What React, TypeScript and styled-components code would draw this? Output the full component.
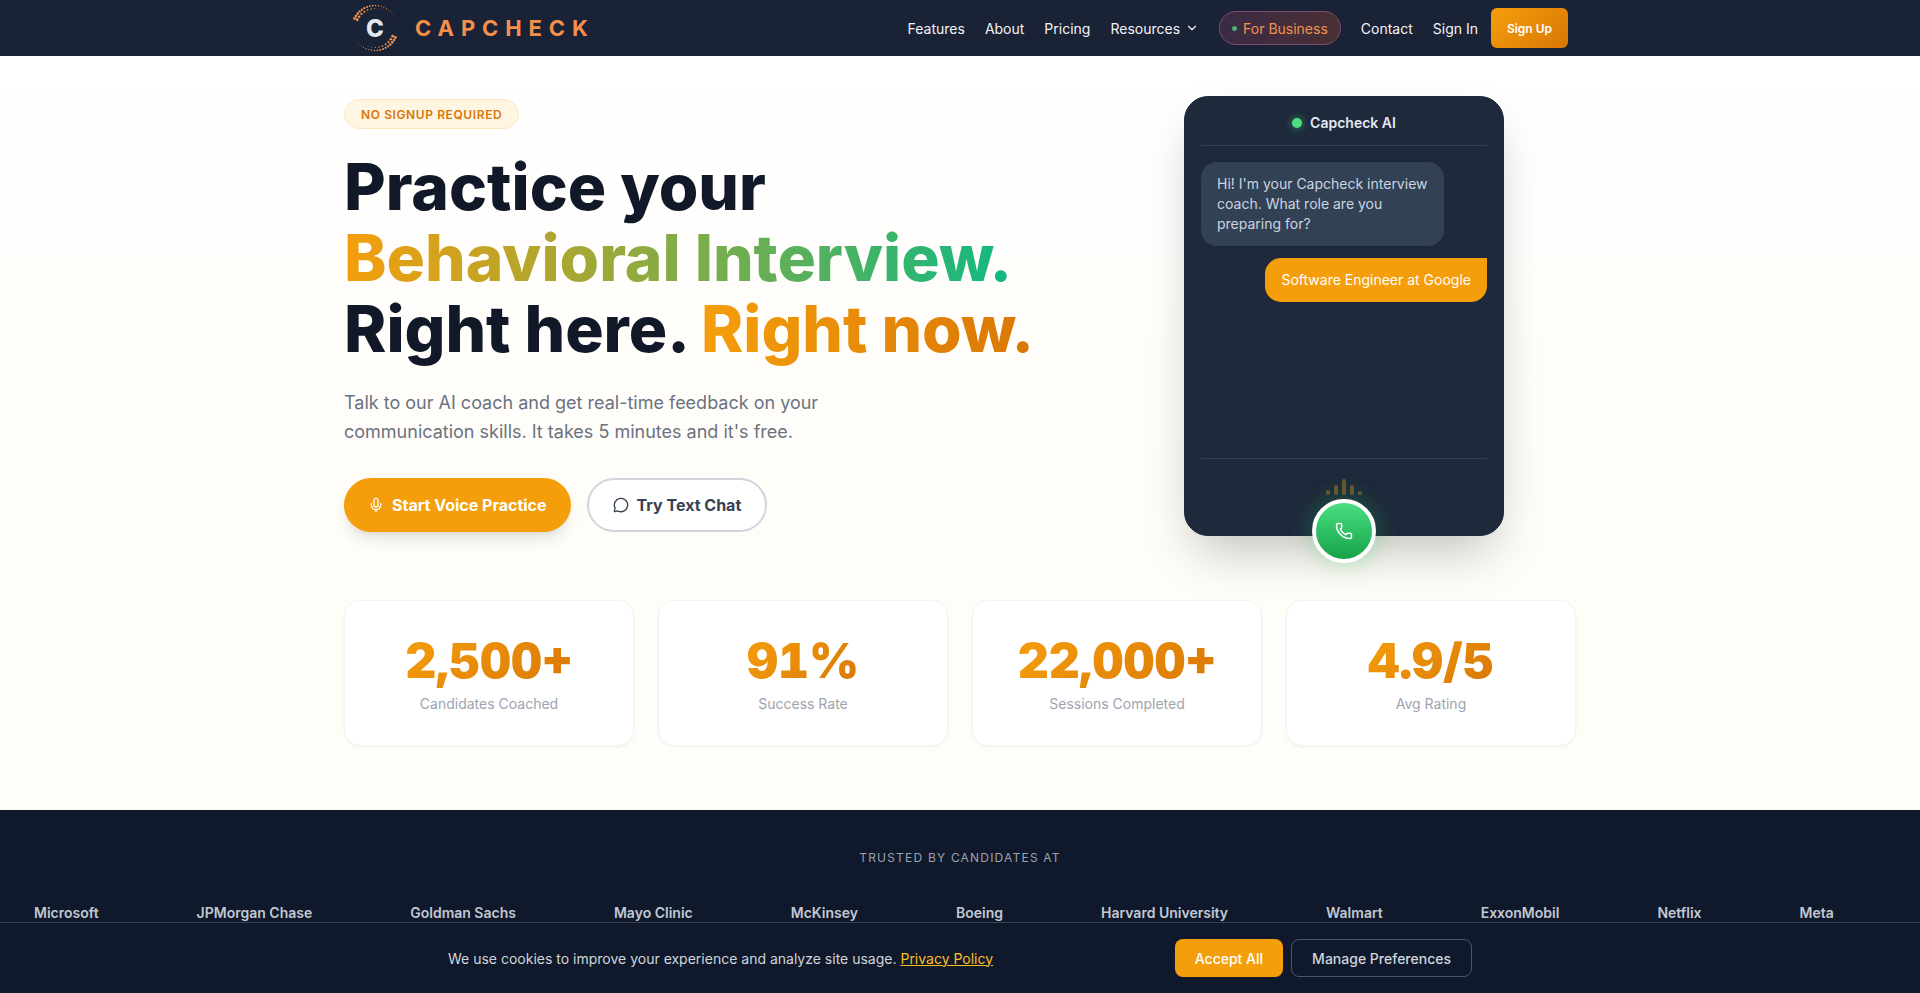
import React from "react";
import styled, { createGlobalStyle } from "styled-components";
import { ChevronDown, MessageCircle, Mic, Phone } from "lucide-react";

const Global = createGlobalStyle`
  * { box-sizing: border-box; }
  html, body { margin: 0; padding: 0; background: #fff; }
  body { font-family: Inter, "Liberation Sans", sans-serif; overflow: hidden; height: 993px; }
`;

const Page = styled.div`
  height: 993px;
  overflow: hidden;
  position: relative;
`;

const Nav = styled.header`
  height: 56px;
  background: #1a2235;
  display: flex;
  justify-content: center;
`;
const NavInner = styled.div`
  width: 1280px;
  padding: 0 32px;
  display: flex;
  align-items: center;
  justify-content: space-between;
`;
const Brand = styled.div`
  display: flex;
  align-items: center;
  gap: 17px;
`;
const BrandName = styled.span`
  font-size: 22px;
  font-weight: 700;
  letter-spacing: 6.9px;
  color: #f58f4b;
`;
const NavLinks = styled.nav`
  display: flex;
  align-items: center;
  gap: 20px;
`;
const NavLink = styled.a`
  display: inline-flex;
  align-items: center;
  gap: 5px;
  font-size: 14px;
  font-weight: 400;
  color: #f3f4f6;
`;
const BusinessPill = styled.a`
  display: inline-flex;
  align-items: center;
  gap: 6px;
  height: 34px;
  padding: 0 12px;
  border-radius: 999px;
  border: 1px solid #7c4a72;
  background: linear-gradient(90deg, #3a2a44, #4a3035);
  color: #f2914f;
  font-size: 14px;
`;
const PillDot = styled.span`
  width: 5px;
  height: 5px;
  border-radius: 50%;
  background: #4caf72;
`;
const SignUp = styled.a`
  display: inline-flex;
  align-items: center;
  justify-content: center;
  width: 77px;
  height: 40px;
  margin-left: -7px;
  border-radius: 6px;
  background: linear-gradient(135deg, #f59e0b, #d97706);
  color: #fff;
  font-size: 12px;
  font-weight: 600;
`;

const Hero = styled.section`
  height: 754px;
  background: linear-gradient(180deg, #ffffff 0%, #fffdf8 60%, #fffdf8 100%);
  display: flex;
  justify-content: center;
`;
const HeroInner = styled.div`
  width: 1280px;
  padding: 40px 24px 0;
  display: flex;
  flex-direction: column;
`;
const HeroTop = styled.div`
  display: grid;
  grid-template-columns: 1fr 320px;
  padding-right: 72px;
  height: 504px;
`;
const HeroCopy = styled.div`
  display: flex;
  flex-direction: column;
  align-items: flex-start;
  padding-top: 3px;
`;
const Badge = styled.span`
  display: inline-flex;
  align-items: center;
  height: 30px;
  padding: 0 16px;
  border-radius: 999px;
  background: #fef5e3;
  border: 1px solid #fde9c0;
  color: #d97706;
  font-size: 12px;
  font-weight: 600;
  letter-spacing: 0.05em;
  text-transform: uppercase;
`;
const Title = styled.h1`
  margin: 22px 0 0;
  font-size: 64px;
  line-height: 71px;
  font-weight: 800;
  color: #111827;
  white-space: nowrap;
`;
const GradientText = styled.span<{ $from: string; $to: string }>`
  background: linear-gradient(90deg, ${(p) => p.$from}, ${(p) => p.$to});
  -webkit-background-clip: text;
  background-clip: text;
  color: transparent;
`;
const Lead = styled.p`
  margin: 24px 0 0;
  width: 540px;
  font-size: 18px;
  line-height: 29px;
  color: #6b7280;
`;
const Actions = styled.div`
  display: flex;
  gap: 16px;
  margin-top: 32px;
`;
const PrimaryButton = styled.a`
  display: inline-flex;
  align-items: center;
  gap: 8px;
  height: 54px;
  padding: 0 24px;
  border-radius: 999px;
  background: #f59e0b;
  color: #fff;
  font-size: 16px;
  font-weight: 700;
  box-shadow: 0 10px 15px -3px rgba(0, 0, 0, 0.1), 0 4px 6px -4px rgba(0, 0, 0, 0.1);
`;
const SecondaryButton = styled.a`
  display: inline-flex;
  align-items: center;
  gap: 8px;
  height: 54px;
  padding: 0 24px;
  border-radius: 999px;
  background: #fff;
  border: 2px solid #d1d5db;
  color: #374151;
  font-size: 16px;
  font-weight: 700;
`;

const PhoneCard = styled.div`
  position: relative;
  width: 320px;
  height: 440px;
  padding: 0 16px;
  border: 1px solid #1e293b;
  border-radius: 24px;
  background: #1e293b;
  box-shadow: 0 25px 50px -12px rgba(0, 0, 0, 0.25);
  display: flex;
  flex-direction: column;
`;
const PhoneHeader = styled.div`
  height: 49px;
  padding-top: 3px;
  flex: none;
  border-bottom: 1px solid #334155;
  display: flex;
  align-items: center;
  justify-content: center;
  gap: 8px;
  color: #e2e8f0;
  font-size: 14px;
  font-weight: 600;
`;
const LiveDot = styled.span`
  width: 10px;
  height: 10px;
  border-radius: 50%;
  background: #4ade80;
  box-shadow: 0 0 8px rgba(74, 222, 128, 0.6);
`;
const Messages = styled.div`
  flex: 1;
  padding-top: 16px;
  display: flex;
  flex-direction: column;
  gap: 12px;
`;
const BotBubble = styled.div`
  align-self: flex-start;
  width: 243px;
  padding: 12px 16px;
  border-radius: 16px;
  background: #334155;
  color: #cbd5e1;
  font-size: 14px;
  line-height: 20px;
`;
const UserBubble = styled.div`
  align-self: flex-end;
  padding: 12px 16px;
  border-radius: 16px 0 16px 16px;
  background: #f59e0b;
  color: #fff;
  font-size: 14px;
  line-height: 20px;
`;
const PhoneFooter = styled.div`
  flex: none;
  height: 77px;
  border-top: 1px solid #334155;
  display: flex;
  justify-content: center;
  align-items: flex-start;
  padding-top: 20px;
`;
const Wave = styled.div`
  display: flex;
  align-items: flex-end;
  gap: 4px;
  height: 16px;
  opacity: 0.35;
`;
const WaveBar = styled.span<{ $h: number }>`
  width: 4px;
  height: ${(p) => p.$h}px;
  border-radius: 2px;
  background: #f59e0b;
`;
const CallButton = styled.div`
  position: absolute;
  left: 127px;
  bottom: -28px;
  width: 64px;
  height: 64px;
  border-radius: 50%;
  border: 4px solid #fff;
  background: linear-gradient(180deg, #4ade80, #16a34a);
  color: #fff;
  display: flex;
  align-items: center;
  justify-content: center;
  box-shadow: 0 0 24px rgba(34, 197, 94, 0.35);
`;

const Stats = styled.div`
  display: grid;
  grid-template-columns: repeat(4, 1fr);
  gap: 24px;
`;
const StatCard = styled.div`
  height: 146px;
  background: #fff;
  border: 1px solid #f3f4f6;
  border-radius: 16px;
  box-shadow: 0 1px 3px rgba(0, 0, 0, 0.05);
  display: flex;
  flex-direction: column;
  align-items: center;
  padding-top: 31px;
`;
const StatValue = styled.div`
  font-size: 48px;
  line-height: 58px;
  font-weight: 900;
  font-variant-numeric: tabular-nums;
  background: linear-gradient(135deg, #f59e0b, #d97706);
  -webkit-background-clip: text;
  background-clip: text;
  color: transparent;
`;
const StatLabel = styled.div`
  margin-top: 4px;
  font-size: 14px;
  line-height: 20px;
  color: #9ca3af;
`;

const Trusted = styled.section`
  height: 183px;
  background: #0f192b;
  padding-top: 40px;
`;
const TrustedTitle = styled.div`
  text-align: center;
  font-size: 12px;
  line-height: 16px;
  letter-spacing: 0.1em;
  color: #9ca3af;
  text-transform: uppercase;
`;
const LogoRow = styled.div`
  display: flex;
  gap: 98px;
  padding-left: 34px;
  margin-top: 37px;
  white-space: nowrap;
`;
const CompanyName = styled.span`
  font-size: 14px;
  line-height: 20px;
  font-weight: 600;
  color: #c2c8d2;
`;

const CookieBar = styled.div`
  position: fixed;
  left: 0;
  right: 0;
  bottom: 0;
  height: 71px;
  background: #0f192b;
  border-top: 1px solid #374151;
  display: flex;
  justify-content: center;
  align-items: center;
`;
const CookieInner = styled.div`
  width: 1024px;
  display: flex;
  align-items: center;
  justify-content: space-between;
`;
const CookieText = styled.span`
  font-size: 14px;
  color: #d1d5db;
`;
const PrivacyLink = styled.a`
  color: #fbbf24;
  text-decoration: underline;
`;
const CookieActions = styled.div`
  display: flex;
  gap: 8px;
`;
const AcceptButton = styled.a`
  display: inline-flex;
  align-items: center;
  height: 38px;
  padding: 0 20px;
  border-radius: 8px;
  background: #f59e0b;
  color: #fff;
  font-size: 14px;
  font-weight: 500;
`;
const ManageButton = styled.a`
  display: inline-flex;
  align-items: center;
  height: 38px;
  padding: 0 20px;
  border-radius: 8px;
  border: 1px solid #4b5563;
  color: #d1d5db;
  font-size: 14px;
  font-weight: 500;
`;

const LogoSvg = styled.svg`
  overflow: visible;
  flex: none;
`;

function dots(cx: number, cy: number, r: number, from: number, to: number, n: number, s0: number, s1: number) {
  return Array.from({ length: n }, (_, i) => {
    const t = i / (n - 1);
    const a = ((from + (to - from) * t) * Math.PI) / 180;
    return (
      <circle key={`${r}-${from}-${i}`} cx={cx + r * Math.cos(a)} cy={cy + r * Math.sin(a)} r={s0 + (s1 - s0) * t} fill="#f0934f" />
    );
  });
}

const Logo = () => (
  <LogoSvg width="46" height="48" viewBox="0 0 46 48" aria-hidden="true">
    {dots(23, 24, 22.5, 330, 205, 18, 0.25, 1.4)}
    {dots(23, 24, 19.5, 290, 205, 9, 0.3, 1.4)}
    {dots(23, 24, 22.5, 150, 25, 18, 0.25, 1.4)}
    {dots(23, 24, 19.5, 110, 25, 9, 0.3, 1.4)}
    <text x="23" y="32.5" textAnchor="middle" fontFamily="Inter, sans-serif" fontWeight="800" fontSize="24" fill="#e2e6ee">C</text>
  </LogoSvg>
);

const stats = [
  ["2,500+", "Candidates Coached"],
  ["91%", "Success Rate"],
  ["22,000+", "Sessions Completed"],
  ["4.9/5", "Avg Rating"],
];
const companies = ["Microsoft", "JPMorgan Chase", "Goldman Sachs", "Mayo Clinic", "McKinsey", "Boeing", "Harvard University", "Walmart", "ExxonMobil", "Netflix", "Meta"];

export default function App() {
  return (
    <Page>
      <Global />
      <Nav>
        <NavInner>
          <Brand>
            <Logo />
            <BrandName>CAPCHECK</BrandName>
          </Brand>
          <NavLinks>
            <NavLink>Features</NavLink>
            <NavLink>About</NavLink>
            <NavLink>Pricing</NavLink>
            <NavLink>
              Resources <ChevronDown size={14} />
            </NavLink>
            <BusinessPill>
              <PillDot />
              For Business
            </BusinessPill>
            <NavLink>Contact</NavLink>
            <NavLink>Sign In</NavLink>
            <SignUp>Sign Up</SignUp>
          </NavLinks>
        </NavInner>
      </Nav>
      <Hero>
        <HeroInner>
          <HeroTop>
            <HeroCopy>
              <Badge>No signup required</Badge>
              <Title>
                Practice your
                <br />
                <GradientText $from="#f59e0b" $to="#10b981">Behavioral Interview.</GradientText>
                <br />
                Right here. <GradientText $from="#f59e0b" $to="#d97706">Right now.</GradientText>
              </Title>
              <Lead>
                Talk to our AI coach and get real-time feedback on your communication skills. It takes 5 minutes and it's free.
              </Lead>
              <Actions>
                <PrimaryButton>
                  <Mic size={16} />
                  Start Voice Practice
                </PrimaryButton>
                <SecondaryButton>
                  <MessageCircle size={16} />
                  Try Text Chat
                </SecondaryButton>
              </Actions>
            </HeroCopy>
            <PhoneCard>
              <PhoneHeader>
                <LiveDot />
                Capcheck AI
              </PhoneHeader>
              <Messages>
                <BotBubble>Hi! I'm your Capcheck interview coach. What role are you preparing for?</BotBubble>
                <UserBubble>Software Engineer at Google</UserBubble>
              </Messages>
              <PhoneFooter>
                <Wave>
                  {[5, 10, 16, 10, 4].map((h, i) => (
                    <WaveBar key={i} $h={h} />
                  ))}
                </Wave>
              </PhoneFooter>
              <CallButton>
                <Phone size={18} />
              </CallButton>
            </PhoneCard>
          </HeroTop>
          <Stats>
            {stats.map(([value, label]) => (
              <StatCard key={label}>
                <StatValue>{value}</StatValue>
                <StatLabel>{label}</StatLabel>
              </StatCard>
            ))}
          </Stats>
        </HeroInner>
      </Hero>
      <Trusted>
        <TrustedTitle>Trusted by candidates at</TrustedTitle>
        <LogoRow>
          {companies.map((c) => (
            <CompanyName key={c}>{c}</CompanyName>
          ))}
        </LogoRow>
      </Trusted>
      <CookieBar>
        <CookieInner>
          <CookieText>
            We use cookies to improve your experience and analyze site usage. <PrivacyLink>Privacy Policy</PrivacyLink>
          </CookieText>
          <CookieActions>
            <AcceptButton>Accept All</AcceptButton>
            <ManageButton>Manage Preferences</ManageButton>
          </CookieActions>
        </CookieInner>
      </CookieBar>
    </Page>
  );
}
